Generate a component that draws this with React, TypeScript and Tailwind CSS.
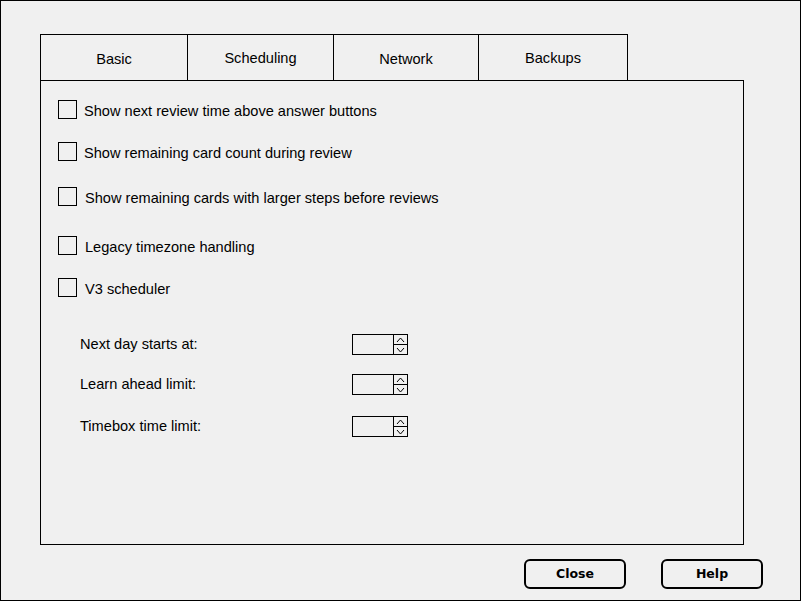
const tabs = [
  { label: "Basic", w: "w-[147px]", last: false, pt: "pt-[4px]" },
  { label: "Scheduling", w: "w-[146px]", last: false, pt: "pt-[2px]" },
  { label: "Network", w: "w-[145px]", last: false, pt: "pt-[4px]" },
  { label: "Backups", w: "w-[150px]", last: true, pt: "pt-[2px]" },
];

const checks = [
  { label: "Show next review time above answer buttons", mt: "mt-[19px]", gap: "ml-[7px]" },
  { label: "Show remaining card count during review", mt: "mt-[23px]", gap: "ml-[7px]" },
  { label: "Show remaining cards with larger steps before reviews", mt: "mt-[26px]", gap: "ml-[8px]" },
  { label: "Legacy timezone handling", mt: "mt-[30px]", gap: "ml-[8px]" },
  { label: "V3 scheduler", mt: "mt-[23px]", gap: "ml-[8px]" },
];

const spins = [
  { label: "Next day starts at:", mt: "mt-[37px]" },
  { label: "Learn ahead limit:", mt: "mt-[19px]" },
  { label: "Timebox time limit:", mt: "mt-[21px]" },
];

function SpinBox() {
  return (
    <div className="flex w-[56px] h-[21px] border border-black">
      <div className="flex-1" />
      <div className="flex flex-col w-[14px] border-l border-black">
        <div className="flex-1 flex items-center justify-center border-b border-black">
          <svg width="9" height="6" viewBox="0 0 9 6">
            <path d="M1 5 L4.5 1 L8 5" fill="none" stroke="black" strokeWidth="1" />
          </svg>
        </div>
        <div className="flex-1 flex items-center justify-center">
          <svg width="9" height="6" viewBox="0 0 9 6">
            <path d="M1 1 L4.5 5 L8 1" fill="none" stroke="black" strokeWidth="1" />
          </svg>
        </div>
      </div>
    </div>
  );
}

export default function App() {
  return (
    <div className="w-[801px] h-[601px] border border-black bg-[#f0f0f0] pt-[33px] pl-[39px] text-black font-['Liberation_Sans',Arial,sans-serif] text-[14.6px]">
      <div className="flex h-[46px]">
        {tabs.map((t) => (
          <div
            key={t.label}
            className={`${t.w} ${t.pt} border-t border-l border-black flex items-center justify-center ${t.last ? "border-r" : ""}`}
          >
            {t.label}
          </div>
        ))}
      </div>

      <div className="w-[704px] h-[465px] border border-black flex flex-col">
        <div className="flex flex-col pl-[17px]">
          {checks.map((c) => (
            <div key={c.label} className={`flex items-center h-[19px] ${c.mt}`}>
              <div className="w-[19px] h-[19px] border border-black" />
              <span className={`${c.gap} leading-none pt-[3px]`}>{c.label}</span>
            </div>
          ))}
        </div>

        <div className="flex flex-col pl-[39px]">
          {spins.map((s) => (
            <div key={s.label} className={`flex items-center h-[21px] ${s.mt}`}>
              <span className="w-[272px] leading-none">{s.label}</span>
              <SpinBox />
            </div>
          ))}
        </div>
      </div>

      <div className="flex justify-end gap-[35px] pr-[37px] mt-[14px]">
        {["Close", "Help"].map((b) => (
          <button
            key={b}
            className="w-[102px] h-[30px] border-2 border-black rounded-[6px] font-['DejaVu_Sans',sans-serif] font-bold text-[12.5px]"
          >
            {b}
          </button>
        ))}
      </div>
    </div>
  );
}
